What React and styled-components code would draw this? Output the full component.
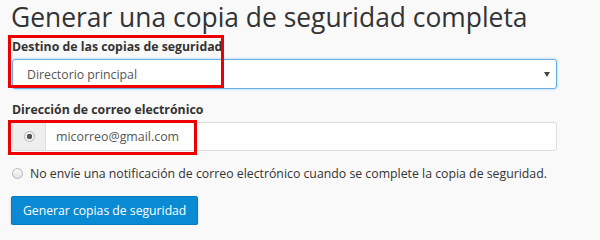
import React from 'react';
import styled, { createGlobalStyle } from 'styled-components';

const GlobalStyle = createGlobalStyle`
  html, body {
    margin: 0;
    padding: 0;
    background: #f9f9f9;
  }
  body {
    font-family: "Open Sans", "Liberation Sans", sans-serif;
    color: #333;
  }
`;

const App = () => {
  return (
    <Page>
      <GlobalStyle />
      <Title>Generar una copia de seguridad completa</Title>

      <FieldGroup $gap={7}>
        <Highlight $left={-4} $top={-4} $width={216} $height={53} />
        <Label>Destino de las copias de seguridad</Label>
        <SelectBox>
          <span>Directorio principal</span>
          <Caret />
        </SelectBox>
      </FieldGroup>

      <FieldGroup $gap={13}>
        <Highlight $left={-4} $top={18} $width={189} $height={35} />
        <Label>Dirección de correo electrónico</Label>
        <InputGroup>
          <Addon>
            <Radio $checked />
          </Addon>
          <TextInput>micorreo@gmail.com</TextInput>
        </InputGroup>
      </FieldGroup>

      <OptionRow>
        <Radio />
        <span>No envíe una notificación de correo electrónico cuando se complete la copia de seguridad.</span>
      </OptionRow>

      <PrimaryButton>Generar copias de seguridad</PrimaryButton>
    </Page>
  );
};

const Page = styled.div`
  width: 545px;
  padding: 2px 0 0 12px;
`;

const Title = styled.h1`
  margin: 0 0 0 -1px;
  font-size: 26.4px;
  font-weight: 400;
  line-height: 30px;
  white-space: nowrap;
  color: #333;
`;

const FieldGroup = styled.div`
  position: relative;
  margin-top: ${(p) => p.$gap}px;
`;

const Highlight = styled.div`
  position: absolute;
  left: ${(p) => p.$left}px;
  top: ${(p) => p.$top}px;
  width: ${(p) => p.$width}px;
  height: ${(p) => p.$height}px;
  border: 3px solid #ec0000;
  box-sizing: border-box;
  pointer-events: none;
  z-index: 2;
`;

const Label = styled.div`
  font-size: 12.3px;
  font-weight: 700;
  line-height: 16px;
  color: #333;
  margin-bottom: 4px;
  white-space: nowrap;
`;

const SelectBox = styled.div`
  display: flex;
  align-items: center;
  justify-content: space-between;
  height: 30px;
  box-sizing: border-box;
  padding: 0 6px 0 14px;
  background: #fff;
  border: 1px solid #66afe9;
  border-radius: 3px;
  box-shadow: 0 0 3px rgba(102, 175, 233, 0.6);
  font-size: 12.3px;
  color: #555;
`;

const Caret = styled.span`
  width: 0;
  height: 0;
  border-left: 3px solid transparent;
  border-right: 3px solid transparent;
  border-top: 5px solid #444;
`;

const InputGroup = styled.div`
  display: flex;
  height: 29px;
  margin-top: 1px;
  box-sizing: border-box;
  border: 1px solid #ddd;
  border-radius: 3px;
  background: #fff;
  overflow: hidden;
`;

const Addon = styled.div`
  width: 32px;
  display: flex;
  align-items: center;
  justify-content: center;
  background: #eee;
  border-right: 1px solid #ddd;
`;

const Radio = styled.span`
  display: inline-block;
  width: 11px;
  height: 11px;
  box-sizing: border-box;
  border-radius: 50%;
  border: 1px solid #b5b5b5;
  background: ${(p) =>
    p.$checked
      ? 'radial-gradient(circle, #555 0 2.5px, #f2f2f2 3px)'
      : 'linear-gradient(#fafafa, #e4e4e4)'};
  flex-shrink: 0;
`;

const TextInput = styled.div`
  flex: 1;
  display: flex;
  align-items: center;
  padding-left: 10px;
  font-size: 12.4px;
  color: #555;
`;

const OptionRow = styled.div`
  display: flex;
  align-items: center;
  gap: 7px;
  height: 18px;
  margin-top: 13px;
  font-size: 12.3px;
  color: #333;
  white-space: nowrap;
`;

const PrimaryButton = styled.button`
  display: block;
  margin: 14px 0 0 -1px;
  height: 29px;
  padding: 0 11px;
  font-family: "Open Sans", "Liberation Sans", sans-serif;
  font-size: 12.2px;
  color: #fff;
  background: #0a8ad3;
  border: 1px solid #0a7bbd;
  border-radius: 2px;
  box-shadow: 0 1px 2px rgba(0, 0, 0, 0.25);
  cursor: pointer;
`;

export default App;
